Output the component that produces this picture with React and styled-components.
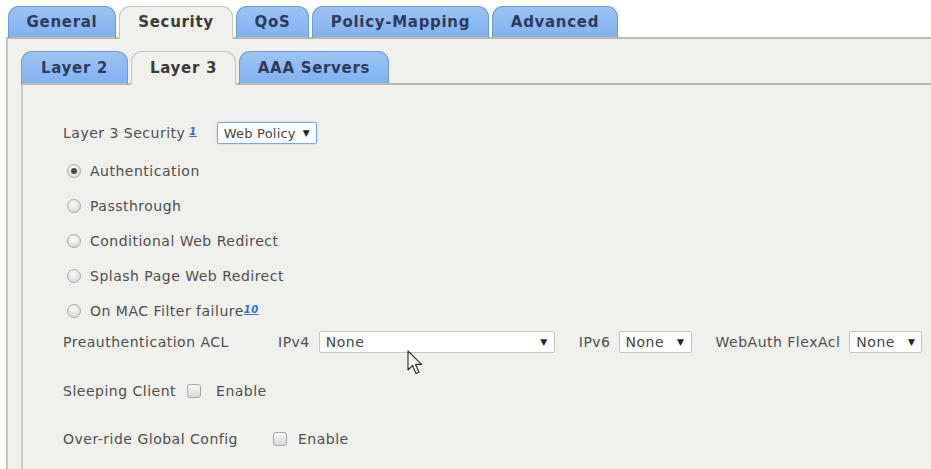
import React from 'react'
import styled, { createGlobalStyle } from 'styled-components'

const GlobalStyle = createGlobalStyle`
body {
  margin: 0;
  background: #ffffff;
  font-family: "DejaVu Sans", Verdana, sans-serif;
  overflow: hidden;
}
`;

const Page = styled.div`
width: 931px;
height: 469px;
padding: 6px 0 0 6px;
box-sizing: border-box;
display: flex;
flex-direction: column;
`;

const TabBar = styled.div`
display: flex;
flex-direction: row;
gap: 3px;
padding-left: ${p => p.$inset}px;
position: relative;
z-index: 2;
margin-bottom: -2px;
`;

const Tab = styled.div`
width: ${p => p.$w}px;
height: ${p => p.$h}px;
box-sizing: border-box;
display: flex;
align-items: center;
justify-content: center;
font-weight: bold;
font-size: 15px;
letter-spacing: 0.7px;
border-radius: 11px 11px 0 0;
border: 1px solid ${p => (p.$active ? '#c4c4c0' : '#6f9bd0')};
border-bottom: ${p => (p.$active ? '2px solid #f0f0ec' : '2px solid #b8b8b4')};
color: ${p => (p.$active ? '#3a3a3a' : '#2e3b58')};
background: ${p => (p.$active ? '#f0f0ec' : 'linear-gradient(180deg, #9cc4f4 0%, #80b2ef 100%)')};
`;

const Panel = styled.div`
flex: 1;
background: #f0f0ec;
border-top: 2px solid #b8b8b4;
border-left: 2px solid #c8c8c4;
padding: 12px 0 0 13px;
display: flex;
flex-direction: column;
`;

const InnerPanel = styled.div`
flex: 1;
background: #f0f0ec;
border-top: 2px solid #b8b8b4;
border-left: 2px solid #c8c8c4;
padding: 37px 0 0 40px;
display: flex;
flex-direction: column;
position: relative;
font-size: 14px;
letter-spacing: 0.5px;
color: #4e4e4e;
`;

const Row = styled.div`
display: flex;
flex-direction: row;
align-items: center;
height: ${p => p.$h || 22}px;
margin-top: ${p => p.$mt || 0}px;
padding-left: ${p => p.$pl || 0}px;
`;

const Label = styled.span`
display: inline-block;
width: ${p => (p.$w ? `${p.$w}px` : 'auto')};
margin-right: ${p => p.$mr || 0}px;
white-space: nowrap;
flex-shrink: 0;
`;

const Sup = styled.sup`
color: #2f6fc4;
font-size: 10px;
font-style: italic;
font-weight: bold;
text-decoration: underline;
margin-left: ${p => p.$ml || 0}px;
position: relative;
top: -2px;
`;

const Select = styled.div`
width: ${p => p.$w}px;
height: 22px;
box-sizing: border-box;
flex-shrink: 0;
white-space: nowrap;
background: #ffffff;
border: 1px solid ${p => (p.$focus ? '#7aa8dc' : '#c4c4c4')};
border-radius: 2px;
box-shadow: ${p => (p.$focus ? '0 0 2px #a8c8ef' : 'none')};
display: flex;
align-items: center;
justify-content: space-between;
padding: 0 6px 0 6px;
font-size: ${p => p.$fs || 14}px;
letter-spacing: ${p => (p.$fs ? 0.2 : 0.5)}px;
color: #444;
margin-left: ${p => p.$ml || 0}px;
margin-right: ${p => p.$mr || 0}px;
`;

const Caret = styled.span`
font-size: 9px;
color: #222;
`;

const Radio = styled.span`
width: 14px;
height: 14px;
border-radius: 50%;
border: 1px solid #a9a9a9;
box-sizing: border-box;
background: radial-gradient(circle at 45% 35%, #fdfdfd 0%, #dedede 65%, #c8c8c8 100%);
display: inline-flex;
align-items: center;
justify-content: center;
margin-right: 9px;
&::after {
  content: '';
  width: 6px;
  height: 6px;
  border-radius: 50%;
  background: ${p => (p.$checked ? '#4a4a4a' : 'transparent')};
}
`;

const Check = styled.span`
width: 14px;
height: 14px;
box-sizing: border-box;
border: 1px solid #a8a8a8;
border-radius: 3px;
background: linear-gradient(180deg, #f8f8f8, #d6d6d6);
margin-right: ${p => p.$mr || 0}px;
`;

const Cursor = styled.svg`
position: absolute;
left: ${p => p.$x}px;
top: ${p => p.$y}px;
`;

const outerTabs = [
  { name: 'General', w: 108 },
  { name: 'Security', w: 114, active: true },
  { name: 'QoS', w: 73 },
  { name: 'Policy-Mapping', w: 177 },
  { name: 'Advanced', w: 126 },
];

const innerTabs = [
  { name: 'Layer 2', w: 107 },
  { name: 'Layer 3', w: 105, active: true },
  { name: 'AAA Servers', w: 150 },
];

const radios = [
  { label: 'Authentication', checked: true },
  { label: 'Passthrough' },
  { label: 'Conditional Web Redirect' },
  { label: 'Splash Page Web Redirect' },
  { label: 'On MAC Filter failure', sup: '10' },
];

function App() {
  return (
    <Page>
      <GlobalStyle />
      <TabBar $inset={2}>
        {outerTabs.map(t => (
          <Tab key={t.name} $w={t.w} $h={33} $active={t.active}>{t.name}</Tab>
        ))}
      </TabBar>
      <Panel>
        <TabBar $inset={0}>
          {innerTabs.map(t => (
            <Tab key={t.name} $w={t.w} $h={34} $active={t.active}>{t.name}</Tab>
          ))}
        </TabBar>
        <InnerPanel>
          <Row>
            <Label>Layer 3 Security</Label>
            <Sup $ml={4}>1</Sup>
            <Select $w={100} $fs={13} $focus $ml={20}>
              Web Policy <Caret>▼</Caret>
            </Select>
          </Row>
          {radios.map((r, i) => (
            <Row key={r.label} $pl={4} $mt={i === 0 ? 16 : 13}>
              <Radio $checked={r.checked} />
              <Label>{r.label}</Label>
              {r.sup && <Sup>{r.sup}</Sup>}
            </Row>
          ))}
          <Row $mt={9}>
            <Label $w={215}>Preauthentication ACL</Label>
            <Label $mr={9}>IPv4</Label>
            <Select $w={236} $mr={24}>None <Caret>▼</Caret></Select>
            <Label $mr={8}>IPv6</Label>
            <Select $w={73} $mr={24}>None <Caret>▼</Caret></Select>
            <Label $mr={9}>WebAuth FlexAcl</Label>
            <Select $w={73}>None <Caret>▼</Caret></Select>
          </Row>
          <Row $mt={27}>
            <Label $mr={11}>Sleeping Client</Label>
            <Check $mr={15} />
            <Label>Enable</Label>
          </Row>
          <Row $mt={26}>
            <Label $w={210}>Over-ride Global Config</Label>
            <Check $mr={11} />
            <Label>Enable</Label>
          </Row>
          <Cursor $x={384} $y={265} width="18" height="26" viewBox="0 0 18 26">
            <path d="M1 1 L1 20 L5.5 15.5 L9 23.5 L12 22.2 L8.6 14.4 L14.6 14.4 Z" fill="#ffffff" stroke="#333" strokeWidth="1.2" strokeLinejoin="round" />
          </Cursor>
        </InnerPanel>
      </Panel>
    </Page>
  );
}

export default App;
